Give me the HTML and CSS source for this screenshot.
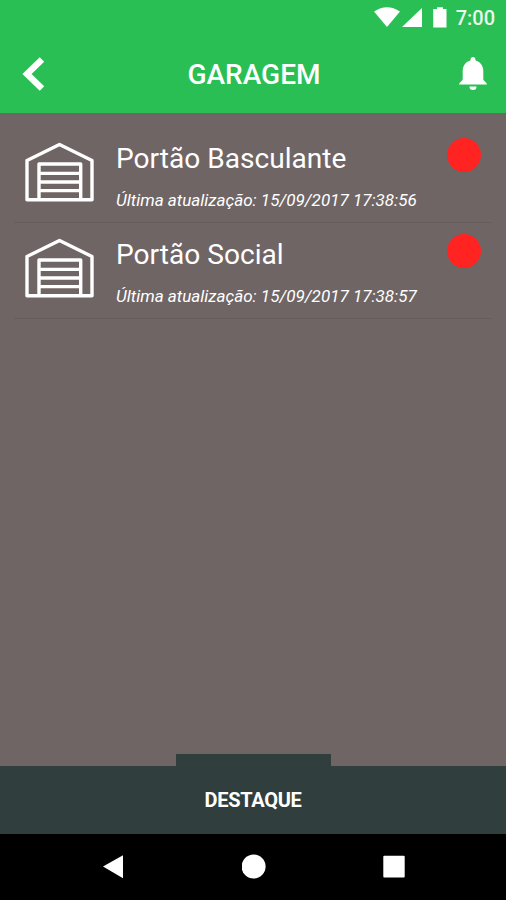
FILE: index.html
```html
<!DOCTYPE html>
<html lang="pt-BR">
<head>
<meta charset="utf-8">
<title>Garagem</title>
<link rel="stylesheet" href="styles.css">
</head>
<body>
<svg class="sprite" aria-hidden="true">
  <symbol id="garage" viewBox="0 0 72 62">
    <path d="M3 19.5 35.5 3.5 68 19.5V58.7H3Z"/>
    <path d="M15 58.7V23H56.7V58.7M15 32.4H56.7M15 41H56.7M15 49.6H56.7"/>
  </symbol>
</svg>
<div class="screen">
  <header class="header">
    <div class="status">
      <svg class="status-icons" viewBox="0 0 76 24" fill="#fff">
        <path d="M0 5.5Q13 -3 26 5.5L13 21Z"/>
        <path d="M28 21 48 2V21Z"/>
        <path d="M63 1.2H69V3H72.5V21.6H59.2V3H63Z"/>
      </svg>
      <span class="clock">7:00</span>
    </div>
    <div class="titlebar">
      <svg class="back" viewBox="0 0 24 36"><path d="M20 2.5 5 17 20 31.5"/></svg>
      <h1 class="title">GARAGEM</h1>
      <svg class="bell" viewBox="0 0 30 36" fill="#fff">
        <path d="M15 0C17 0 17.4 1.5 17.6 3.5C22.8 5 25.3 9 25.3 14V22C25.3 24 28.5 25 29 27.5H1C1.5 25 4.7 24 4.7 22V14C4.7 9 7.2 5 12.4 3.5C12.6 1.5 13 0 15 0Z"/>
        <path d="M11.5 29.5H18.5A3.5 3.5 0 0 1 11.5 29.5Z"/>
      </svg>
    </div>
  </header>
  <main class="list">
    <article class="row">
      <svg class="garage"><use href="#garage"/></svg>
      <div class="info">
        <h2 class="name">Portão Basculante</h2>
        <p class="updated">Última atualização: 15/09/2017 17:38:56</p>
      </div>
      <span class="state"></span>
    </article>
    <article class="row">
      <svg class="garage"><use href="#garage"/></svg>
      <div class="info">
        <h2 class="name">Portão Social</h2>
        <p class="updated">Última atualização: 15/09/2017 17:38:57</p>
      </div>
      <span class="state"></span>
    </article>
  </main>
  <div class="tab"></div>
  <footer class="highlight">DESTAQUE</footer>
  <nav class="navbar">
    <svg viewBox="0 0 24 26"><path d="M1 12.5 21 1.2V24.2Z"/></svg>
    <svg viewBox="0 0 24 26"><circle cx="11.6" cy="12.5" r="12"/></svg>
    <svg viewBox="0 0 24 26"><rect x="1.3" y="1.8" width="21.4" height="21.8" rx="1"/></svg>
  </nav>
</div>
</body>
</html>
```

FILE: styles.css
```css
* { box-sizing: border-box; }
body { margin: 0; background: #706565; }
.sprite { display: none; }
.screen {
  width: 506px;
  height: 900px;
  display: flex;
  flex-direction: column;
  font-family: Roboto, sans-serif;
  color: #fff;
}
.header { height: 113px; background: #2abf55; }
.status {
  height: 36px;
  padding: 6px 11px 0 0;
  display: flex;
  justify-content: flex-end;
  gap: 6px;
}
.status-icons { width: 76px; height: 24px; }
.clock { font-size: 20px; line-height: 24px; font-weight: 500; color: #e9f8ed; }
.titlebar {
  height: 77px;
  padding: 0 18px 0 20px;
  display: grid;
  grid-template-columns: 30px 1fr 30px;
  align-items: center;
}
.back { width: 24px; height: 36px; margin-left: 2px; fill: none; stroke: #fff; stroke-width: 6.4; }
.title { margin: 0; font-size: 28px; line-height: 36px; font-weight: 500; text-align: center; }
.bell { width: 30px; height: 36px; }
.list { flex: 1; padding: 14px 14px 0; }
.row {
  height: 96px;
  display: grid;
  grid-template-columns: 102px 1fr 34px;
  padding: 0 11px 0 0;
  border-bottom: 1px solid #685c5c;
}
.garage {
  width: 72px;
  height: 62px;
  margin: 14px 0 0 10px;
  fill: none;
  stroke: #fff;
  stroke-width: 3.4;
  stroke-linejoin: round;
}
.info { padding-top: 14px; white-space: nowrap; }
.name { margin: 0; font-size: 28.1px; line-height: 36px; font-weight: 400; }
.updated { margin: 10px 0 0; font-size: 17.05px; line-height: 26px; font-style: italic; }
.state { width: 34px; height: 34px; margin-top: 11px; border-radius: 50%; background: #ff2321; }
.tab { width: 155px; height: 12px; margin: 0 auto; background: #303f3d; }
.highlight {
  height: 68px;
  background: #303f3d;
  font-size: 20px;
  line-height: 68px;
  font-weight: 700;
  letter-spacing: -0.3px;
  text-align: center;
}
.navbar {
  height: 66px;
  padding: 0 100px 0 102px;
  background: #000;
  display: flex;
  align-items: center;
  justify-content: space-between;
  fill: #fff;
}
.navbar svg { width: 24px; height: 26px; }
```
